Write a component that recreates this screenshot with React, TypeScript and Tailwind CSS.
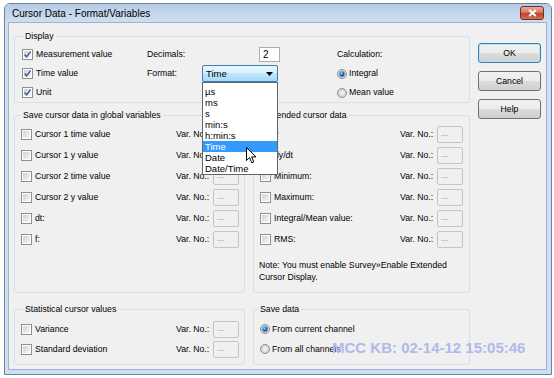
import React from 'react';

const saveRows = ['Cursor 1 time value', 'Cursor 1 y value', 'Cursor 2 time value', 'Cursor 2 y value', 'dt:', 'f:'];
const extRows = ['y', 'dy/dt', 'Minimum:', 'Maximum:', 'Integral/Mean value:', 'RMS:'];
const formats = ['µs', 'ms', 's', 'min:s', 'h:min:s', 'Time', 'Date', 'Date/Time'];

function Check({ checked = false }: { checked?: boolean }) {
  return (
    <svg width="11" height="11" viewBox="0 0 11 11" className="shrink-0">
      <defs>
        <linearGradient id="cbg" x1="0" y1="0" x2="1" y2="1">
          <stop offset="0" stopColor="#d0d0d0" />
          <stop offset="1" stopColor="#f8f8f8" />
        </linearGradient>
      </defs>
      <rect x="0.5" y="0.5" width="10" height="10" fill="#fff" stroke="#8e8f8f" />
      <rect x="2" y="2" width="7" height="7" fill="url(#cbg)" />
      {checked && <path d="M2.6 5.4 L4.6 7.8 L8.6 2.6" fill="none" stroke="#3f5fa8" strokeWidth="1.5" />}
    </svg>
  );
}

function Radio({ checked = false }: { checked?: boolean }) {
  return (
    <svg width="10" height="10" viewBox="0 0 10 10" className="shrink-0">
      <defs>
        <radialGradient id="rbg" cx="0.5" cy="0.5" r="0.5">
          <stop offset="0" stopColor="#f6f6f6" />
          <stop offset="1" stopColor="#cfcfcf" />
        </radialGradient>
        <radialGradient id="rdot" cx="0.4" cy="0.35" r="0.65">
          <stop offset="0" stopColor="#9ad6f7" />
          <stop offset="0.55" stopColor="#1c74c8" />
          <stop offset="1" stopColor="#0d4a88" />
        </radialGradient>
      </defs>
      <circle cx="5" cy="5" r="4.5" fill="url(#rbg)" stroke="#8e8f8f" />
      {checked && <circle cx="5" cy="5" r="2.7" fill="url(#rdot)" />}
    </svg>
  );
}

function VarBox() {
  return (
    <div className="w-[26px] h-[17px] shrink-0 border border-[#c4c4c4] rounded-[2px] bg-[#f0f0f0] flex items-center pl-[3px] text-[7px] leading-none text-[#a3a3a3]">
      ---
    </div>
  );
}

function VarRow({ label, h }: { label: string; h: string }) {
  return (
    <div className={`flex items-center ${h}`}>
      <Check />
      <span className="ml-[3px] flex-1 whitespace-nowrap">{label}</span>
      <span className="w-[37px] whitespace-nowrap">Var. No.:</span>
      <VarBox />
    </div>
  );
}

function Group({
  label,
  legendClass,
  className,
  children,
}: {
  label: string;
  legendClass: string;
  className: string;
  children: React.ReactNode;
}) {
  return (
    <fieldset className={`border border-[#d5dfe5] rounded-[3px] min-w-0 ${className}`}>
      <legend className={`px-[2px] leading-[11px] ${legendClass}`}>{label}</legend>
      {children}
    </fieldset>
  );
}

function Btn({ label, isDefault = false }: { label: string; isDefault?: boolean }) {
  return (
    <div
      className={`h-[20px] rounded-[3px] border flex items-center justify-center bg-[linear-gradient(#f2f2f2,#ebebeb_50%,#dddddd_50%,#cfcfcf)] ${
        isDefault ? 'border-[#3c7fb1] shadow-[inset_0_0_0_1px_#b9e0f7]' : 'border-[#707070]'
      }`}
    >
      {label}
    </div>
  );
}

export default function App() {
  return (
    <div className="relative w-[554px] h-[378px] bg-white pt-[3px] pl-[4px] font-['Liberation_Sans',Arial,sans-serif] text-[8.7px] leading-[11px] text-black">
      <div className="w-[548px] h-[372px] rounded-t-[6px] border border-[#6f8197] bg-[#cddff2] flex flex-col">
        {/* title bar */}
        <div className="h-[18px] flex items-center pl-[7px] rounded-t-[5px] bg-[linear-gradient(#b6cce6,#cfdff1)]">
          <span className="text-[10px]">Cursor Data - Format/Variables</span>
          <div className="ml-auto mr-[7px] w-[24px] h-[14px] rounded-[3px] border border-[#6e3128] bg-[linear-gradient(#e9a999,#d67a67_45%,#c2412c_55%,#d0705c)] flex items-center justify-center">
            <svg width="9" height="8" viewBox="0 0 9 8">
              <path d="M1.2 1 L7.8 7 M7.8 1 L1.2 7" stroke="#fff" strokeWidth="1.8" />
            </svg>
          </div>
        </div>

        {/* client area */}
        <div className="ml-[3px] w-[539px] h-[348px] border border-[#9fb3cb] bg-[#f0f0f0] flex pl-[5px] pt-[8px]">
          <div className="w-[456px] flex flex-col">
            <Group label="Display" legendClass="ml-[8px]" className="h-[72px]">
              <div className="flex pt-[3px] pl-[7px]">
                <div className="w-[125px] flex flex-col">
                  <div className="h-[19px] flex items-center">
                    <Check checked />
                    <span className="ml-[3px]">Measurement value</span>
                  </div>
                  <div className="h-[19px] flex items-center">
                    <Check checked />
                    <span className="ml-[3px]">Time value</span>
                  </div>
                  <div className="h-[19px] flex items-center">
                    <Check checked />
                    <span className="ml-[3px]">Unit</span>
                  </div>
                </div>
                <div className="w-[190px] flex flex-col">
                  <div className="h-[19px] flex items-center">
                    <span className="w-[112px]">Decimals:</span>
                    <div className="w-[21px] h-[15px] bg-white border border-[#abadb3] flex items-center pl-[3px] text-[10px]">
                      2
                    </div>
                  </div>
                  <div className="h-[19px] flex items-center">
                    <span className="w-[55px]">Format:</span>
                    <div className="relative">
                      <div className="w-[76px] h-[17px] rounded-[2px] border border-[#3c7fb1] bg-[linear-gradient(#eaf6fd,#d9f0fc_50%,#bee6fd_50%,#a7d9f5)] flex items-center pl-[3px] pr-[4px]">
                        <span className="flex-1 text-[9.5px]">Time</span>
                        <svg width="7" height="4" viewBox="0 0 7 4">
                          <path d="M0 0 H7 L3.5 4 Z" fill="#000" />
                        </svg>
                      </div>
                      {/* open list */}
                      <div className="absolute left-0 top-[17px] z-10 w-[76px] bg-white border border-[#646464] pt-[3px]">
                        {formats.map((f) => (
                          <div
                            key={f}
                            className={`h-[11px] pl-[2px] flex items-center text-[9.5px] ${
                              f === 'Time' ? 'bg-[#3399ff] text-white' : ''
                            }`}
                          >
                            {f}
                          </div>
                        ))}
                      </div>
                    </div>
                  </div>
                </div>
                <div className="flex flex-col">
                  <div className="h-[19px] flex items-center">Calculation:</div>
                  <div className="h-[19px] flex items-center">
                    <Radio checked />
                    <span className="ml-[2px]">Integral</span>
                  </div>
                  <div className="h-[19px] flex items-center">
                    <Radio />
                    <span className="ml-[2px]">Mean value</span>
                  </div>
                </div>
              </div>
            </Group>

            <div className="flex gap-[8px] mt-[7px]">
              <Group label="Save cursor data in global variables" legendClass="ml-[6px]" className="w-[231px] h-[183px]">
                <div className="pt-[3px] pl-[6px] pr-[5px] flex flex-col">
                  {saveRows.map((r) => (
                    <VarRow key={r} label={r} h="h-[21px]" />
                  ))}
                </div>
              </Group>
              <Group label="Extended cursor data" legendClass="ml-[8px]" className="w-[217px] h-[183px]">
                <div className="pt-[3px] pl-[6px] pr-[6px] flex flex-col">
                  {extRows.map((r) => (
                    <VarRow key={r} label={r} h="h-[21px]" />
                  ))}
                </div>
                <p className="mt-[9px] pl-[5px] leading-[12px] whitespace-nowrap">
                  Note: You must enable Survey»Enable Extended
                  <br />
                  Cursor Display.
                </p>
              </Group>
            </div>

            <div className="flex gap-[8px] mt-[11px]">
              <Group label="Statistical cursor values" legendClass="ml-[8px]" className="w-[231px] h-[61px]">
                <div className="pt-[4px] pl-[6px] pr-[5px] flex flex-col">
                  <VarRow label="Variance" h="h-[20px]" />
                  <VarRow label="Standard deviation" h="h-[20px]" />
                </div>
              </Group>
              <Group label="Save data" legendClass="ml-[4px]" className="w-[217px] h-[61px]">
                <div className="pt-[4px] pl-[6px] flex flex-col">
                  <div className="h-[20px] flex items-center">
                    <Radio checked />
                    <span className="ml-[2px]">From current channel</span>
                  </div>
                  <div className="h-[20px] flex items-center">
                    <Radio />
                    <span className="ml-[2px]">From all channels</span>
                  </div>
                </div>
              </Group>
            </div>
          </div>

          <div className="ml-[8px] w-[63px] mt-[12px] flex flex-col gap-[8px]">
            <Btn label="OK" isDefault />
            <Btn label="Cancel" />
            <Btn label="Help" />
          </div>
        </div>
      </div>

      {/* mouse pointer over the open list */}
      <svg className="absolute left-[246px] top-[147px] z-20" width="11" height="17" viewBox="0 0 11 17">
        <path d="M0.5 0.5 L0.5 13.5 L3.6 10.6 L5.8 15.8 L7.8 14.9 L5.7 9.9 L10 9.9 Z" fill="#fff" stroke="#000" strokeWidth="1" />
      </svg>

      {/* watermark */}
      <div className="absolute left-[332px] top-[339px] text-[15px] leading-[17px] font-bold text-[#b3b8ea] whitespace-nowrap">
        MCC KB: 02-14-12 15:05:46
      </div>
    </div>
  );
}
